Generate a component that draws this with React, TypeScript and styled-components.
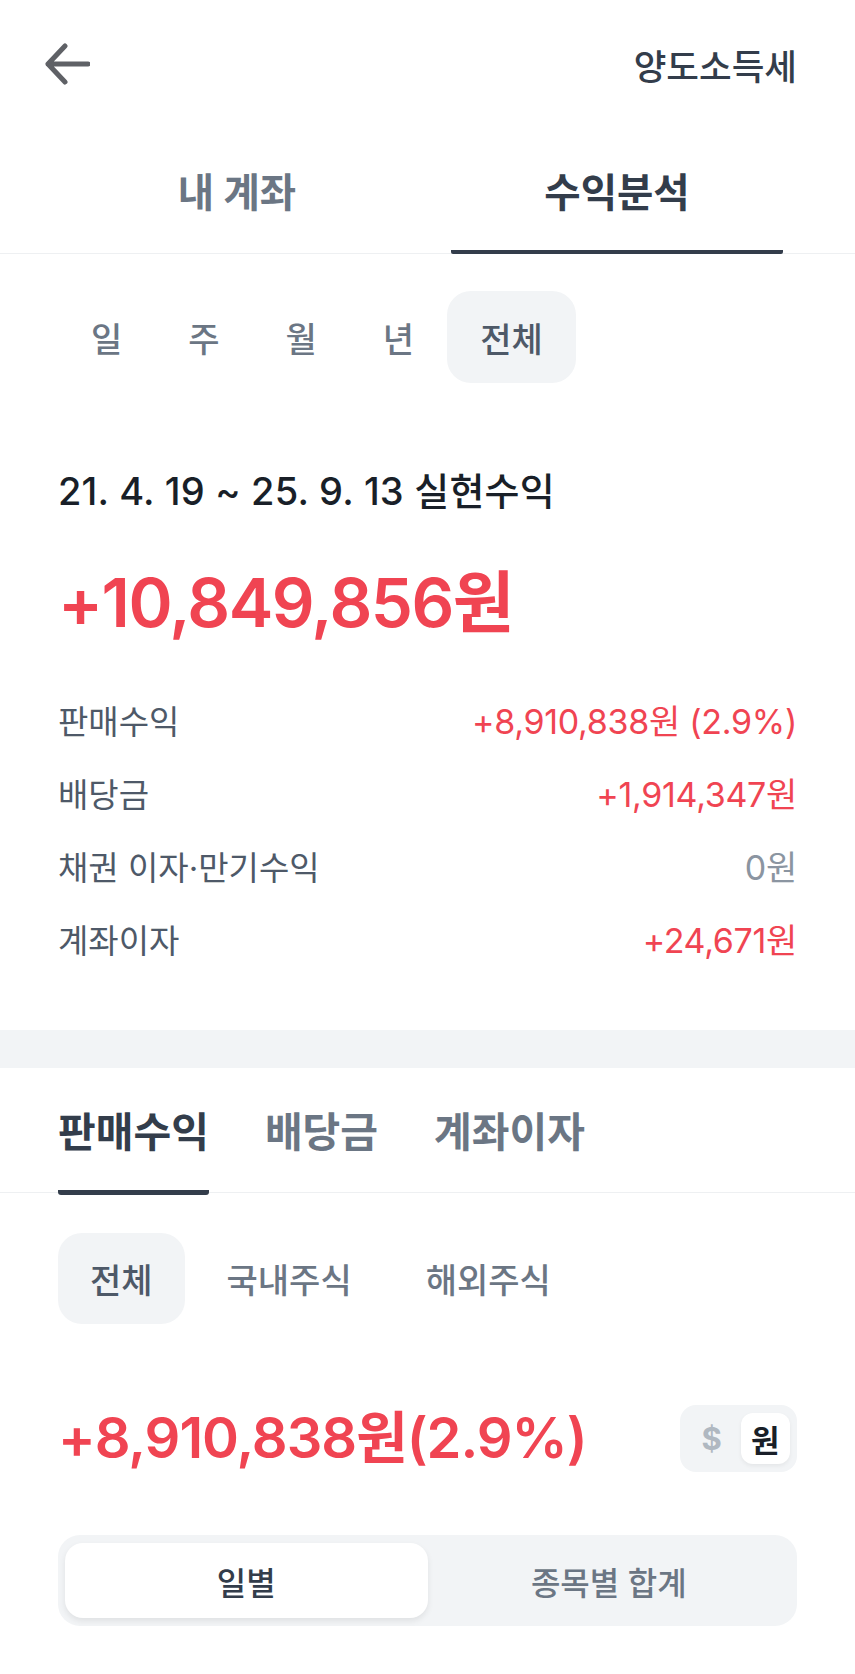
import styled, { createGlobalStyle } from 'styled-components';

const GlobalStyle = createGlobalStyle`
	html, body {
		margin: 0;
		padding: 0;
		background: #ffffff;
	}
	body {
		font-family: Inter, 'Noto Sans CJK KR', sans-serif;
		-webkit-font-smoothing: antialiased;
	}
	* {
		box-sizing: border-box;
	}
`;

const RED = '#f04452';

const periods = ['일', '주', '월', '년', '전체'];

const breakdown = [
	{ label: '판매수익', value: '+8,910,838원 (2.9%)', tone: 'red' },
	{ label: '배당금', value: '+1,914,347원', tone: 'red' },
	{ label: '채권 이자·만기수익', value: '0원', tone: 'gray' },
	{ label: '계좌이자', value: '+24,671원', tone: 'red' },
] as const;

const detailTabs = ['판매수익', '배당금', '계좌이자'];
const markets = ['전체', '국내주식', '해외주식'];

export default function App() {
	return (
		<>
			<GlobalStyle />
			<Page>
				<Header>
					<BackButton aria-label="뒤로">
						<svg width="46" height="44" viewBox="0 0 46 44" fill="none">
							<path
								d="M21 4 L4 22 L21 40 M4 22 H44"
								stroke="#5f6166"
								strokeWidth="5"
								strokeLinecap="round"
								strokeLinejoin="round"
							/>
						</svg>
					</BackButton>
					<HeaderTitle>양도소득세</HeaderTitle>
				</Header>

				<MainTabs>
					<MainTab>내 계좌</MainTab>
					<MainTab $active>수익분석</MainTab>
				</MainTabs>

				<PeriodRow>
					{periods.map(p => (
						<PeriodItem key={p} $active={p === '전체'}>
							{p}
						</PeriodItem>
					))}
				</PeriodRow>

				<Summary>
					<RangeText>21. 4. 19 ~ 25. 9. 13 실현수익</RangeText>
					<TotalAmount>+10,849,856원</TotalAmount>
					<BreakdownList>
						{breakdown.map(row => (
							<BreakdownRow key={row.label}>
								<RowLabel>{row.label}</RowLabel>
								<RowValue $tone={row.tone}>{row.value}</RowValue>
							</BreakdownRow>
						))}
					</BreakdownList>
				</Summary>

				<SectionGap />

				<DetailTabs>
					{detailTabs.map(t => (
						<DetailTab key={t} $active={t === '판매수익'}>
							{t}
						</DetailTab>
					))}
				</DetailTabs>

				<ChipRow>
					{markets.map(m => (
						<Chip key={m} $active={m === '전체'}>
							{m}
						</Chip>
					))}
				</ChipRow>

				<AmountRow>
					<DetailAmount>+8,910,838원(2.9%)</DetailAmount>
					<CurrencyToggle>
						<CurrencyOption>$</CurrencyOption>
						<CurrencyOption $active>원</CurrencyOption>
					</CurrencyToggle>
				</AmountRow>

				<Segmented>
					<Segment $active>일별</Segment>
					<Segment>종목별 합계</Segment>
				</Segmented>
			</Page>
		</>
	);
}

const Page = styled.div`
	width: 855px;
	min-height: 1674px;
	background: #ffffff;
	padding-bottom: 48px;
`;

const Header = styled.header`
	height: 128px;
	display: flex;
	align-items: center;
	justify-content: space-between;
	padding: 0 58px 0 44px;
`;

const BackButton = styled.button`
	border: 0;
	background: none;
	padding: 0;
	display: flex;
	cursor: pointer;
`;

const HeaderTitle = styled.span`
	font-size: 35.5px;
	font-weight: 500;
	color: #333d4b;
`;

const MainTabs = styled.nav`
	display: flex;
	gap: 48px;
	padding: 0 72px 0 71px;
	border-bottom: 1px solid #eef0f2;
`;

const MainTab = styled.div<{ $active?: boolean }>`
	flex: 1;
	height: 126px;
	margin-bottom: -1px;
	display: flex;
	align-items: center;
	justify-content: center;
	font-size: 39.5px;
	font-weight: 700;
	color: ${({ $active }) => ($active ? '#333d4b' : '#6b7684')};
	border-bottom: 4px solid ${({ $active }) => ($active ? '#333d4b' : 'transparent')};
	border-radius: 0 0 2px 2px;
`;

const PeriodRow = styled.div`
	display: flex;
	padding: 0 58px;
	margin-top: 37px;
`;

const PeriodItem = styled.div<{ $active?: boolean }>`
	height: 92px;
	padding: 0 33px;
	border-radius: 24px;
	display: flex;
	align-items: center;
	font-size: 34px;
	font-weight: 500;
	color: ${({ $active }) => ($active ? '#4e5968' : '#6b7684')};
	background: ${({ $active }) => ($active ? '#f2f4f6' : 'transparent')};
`;

const Summary = styled.section`
	padding: 0 58px;
`;

const RangeText = styled.div`
	margin-top: 84px;
	line-height: 48px;
	font-size: 38px;
	font-weight: 500;
	color: #191f28;
	letter-spacing: 0.2px;
`;

const TotalAmount = styled.div`
	margin-top: 48px;
	line-height: 80px;
	font-size: 67px;
	font-weight: 600;
	color: ${RED};
	letter-spacing: -1.5px;
`;

const BreakdownList = styled.div`
	margin-top: 40px;
	display: flex;
	flex-direction: column;
`;

const BreakdownRow = styled.div`
	height: 73px;
	display: flex;
	align-items: center;
	justify-content: space-between;
`;

const RowLabel = styled.span`
	font-size: 33px;
	color: #4e5968;
`;

const RowValue = styled.span<{ $tone: 'red' | 'gray' }>`
	font-size: 34px;
	color: ${({ $tone }) => ($tone === 'red' ? RED : '#8b95a1')};
	letter-spacing: -0.3px;
`;

const SectionGap = styled.div`
	margin-top: 55px;
	height: 38px;
	background: #f2f4f6;
`;

const DetailTabs = styled.nav`
	display: flex;
	gap: 56px;
	padding: 0 58px;
	border-bottom: 1px solid #eef0f2;
`;

const DetailTab = styled.div<{ $active?: boolean }>`
	height: 127px;
	margin-bottom: -3px;
	display: flex;
	align-items: center;
	font-size: 41px;
	font-weight: 700;
	color: ${({ $active }) => ($active ? '#333d4b' : '#6b7684')};
	border-bottom: 5px solid ${({ $active }) => ($active ? '#333d4b' : 'transparent')};
	border-radius: 0 0 3px 3px;
`;

const ChipRow = styled.div`
	display: flex;
	gap: 10px;
	padding: 0 58px;
	margin-top: 40px;
`;

const Chip = styled.div<{ $active?: boolean }>`
	height: 91px;
	padding: 0 32px;
	border-radius: 24px;
	display: flex;
	align-items: center;
	font-size: 34px;
	font-weight: 500;
	color: ${({ $active }) => ($active ? '#4e5968' : '#6b7684')};
	background: ${({ $active }) => ($active ? '#f2f4f6' : 'transparent')};
`;

const AmountRow = styled.div`
	display: flex;
	align-items: center;
	justify-content: space-between;
	padding: 0 58px;
	margin-top: 81px;
`;

const DetailAmount = styled.div`
	font-size: 56px;
	font-weight: 600;
	color: ${RED};
	letter-spacing: -1px;
	line-height: 67px;
`;

const CurrencyToggle = styled.div`
	width: 117px;
	height: 67px;
	padding: 8px 7px;
	border-radius: 16px;
	background: #f2f4f6;
	display: flex;
	gap: 4px;
`;

const CurrencyOption = styled.div<{ $active?: boolean }>`
	flex: 1;
	display: flex;
	align-items: center;
	justify-content: center;
	border-radius: 12px;
	font-size: 31px;
	font-weight: 700;
	color: ${({ $active }) => ($active ? '#191f28' : '#b0b8c1')};
	background: ${({ $active }) => ($active ? '#ffffff' : 'transparent')};
	box-shadow: ${({ $active }) => ($active ? '0 2px 4px rgba(0, 0, 0, 0.06)' : 'none')};
`;

const Segmented = styled.div`
	margin: 63px 58px 0;
	height: 91px;
	padding: 8px 7px;
	border-radius: 22px;
	background: #f2f4f6;
	display: flex;
`;

const Segment = styled.div<{ $active?: boolean }>`
	flex: 1;
	display: flex;
	align-items: center;
	justify-content: center;
	border-radius: 18px;
	font-size: 32px;
	font-weight: 500;
	color: ${({ $active }) => ($active ? '#333d4b' : '#6b7684')};
	background: ${({ $active }) => ($active ? '#ffffff' : 'transparent')};
	box-shadow: ${({ $active }) => ($active ? '0 3px 6px rgba(0, 0, 0, 0.08)' : 'none')};
`;
